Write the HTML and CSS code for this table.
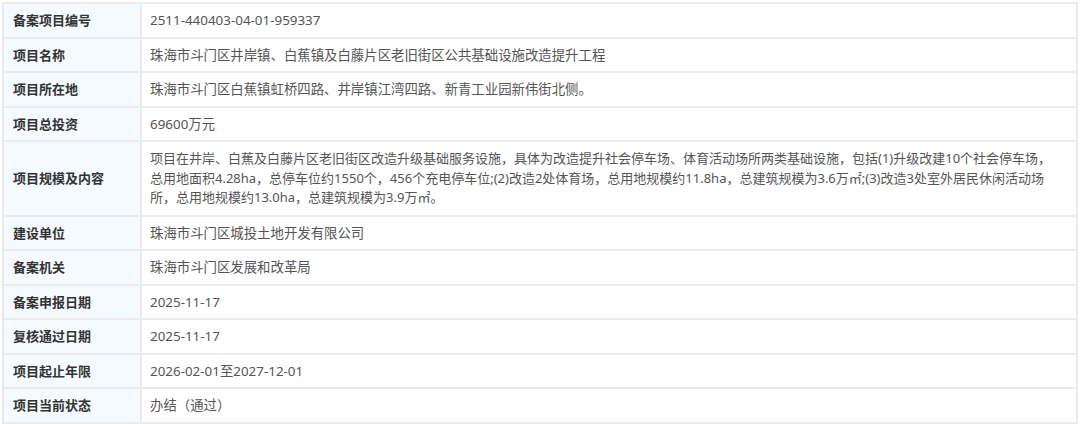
FILE: index.html
```html
<!DOCTYPE html>
<html lang="zh-CN">
<head>
    <meta charset="UTF-8">
    <meta name="viewport" content="width=device-width, initial-scale=1.0">
    <title>项目备案信息</title>
    <link rel="stylesheet" href="styles.css">
</head>
<body>
    <div class="wrap">
        <table class="info">
            <colgroup>
                <col class="col-label">
                <col>
            </colgroup>
            <tr><th>备案项目编号</th><td>2511-440403-04-01-959337</td></tr>
            <tr><th>项目名称</th><td>珠海市斗门区井岸镇、白蕉镇及白藤片区老旧街区公共基础设施改造提升工程</td></tr>
            <tr><th>项目所在地</th><td>珠海市斗门区白蕉镇虹桥四路、井岸镇江湾四路、新青工业园新伟街北侧。</td></tr>
            <tr><th>项目总投资</th><td>69600万元</td></tr>
            <tr class="tall"><th>项目规模及内容</th><td>项目在井岸、白蕉及白藤片区老旧街区改造升级基础服务设施，具体为改造提升社会停车场、体育活动场所两类基础设施，包括(1)升级改建10个社会停车场，总用地面积4.28ha，总停车位约1550个，456个充电停车位;(2)改造2处体育场，总用地规模约11.8ha，总建筑规模为3.6万㎡;(3)改造3处室外居民休闲活动场所，总用地规模约13.0ha，总建筑规模为3.9万㎡。</td></tr>
            <tr><th>建设单位</th><td>珠海市斗门区城投土地开发有限公司</td></tr>
            <tr><th>备案机关</th><td>珠海市斗门区发展和改革局</td></tr>
            <tr><th>备案申报日期</th><td>2025-11-17</td></tr>
            <tr><th>复核通过日期</th><td>2025-11-17</td></tr>
            <tr><th>项目起止年限</th><td>2026-02-01至2027-12-01</td></tr>
            <tr><th>项目当前状态</th><td>办结（通过）</td></tr>
        </table>
    </div>
</body>
</html>
```

FILE: styles.css
```css
body {
    margin: 0;
    background: #fff;
    font-family: "Noto Sans", "Noto Sans CJK SC", sans-serif;
}
.wrap {
    padding: 2px;
}
.info {
    width: 1076px;
    border-collapse: collapse;
    table-layout: fixed;
    border: 2px solid #ebebeb;
}
.col-label {
    width: 138px;
}
.info th,
.info td {
    border: 2px solid #ebebeb;
    padding: 6px 8px;
    line-height: 20.5px;
    text-align: left;
    vertical-align: middle;
}
.info th {
    background-color: #f4fafd;
    color: #333;
    font-size: 13px;
    font-weight: bold;
    padding-left: 9px;
}
.info td {
    color: #555;
    font-size: 13.4px;
    padding-right: 14px;
}
.info .tall td {
    font-size: 13px;
    line-height: 19.5px;
    padding-top: 7px;
    padding-bottom: 7px;
    padding-right: 22px;
}
```
